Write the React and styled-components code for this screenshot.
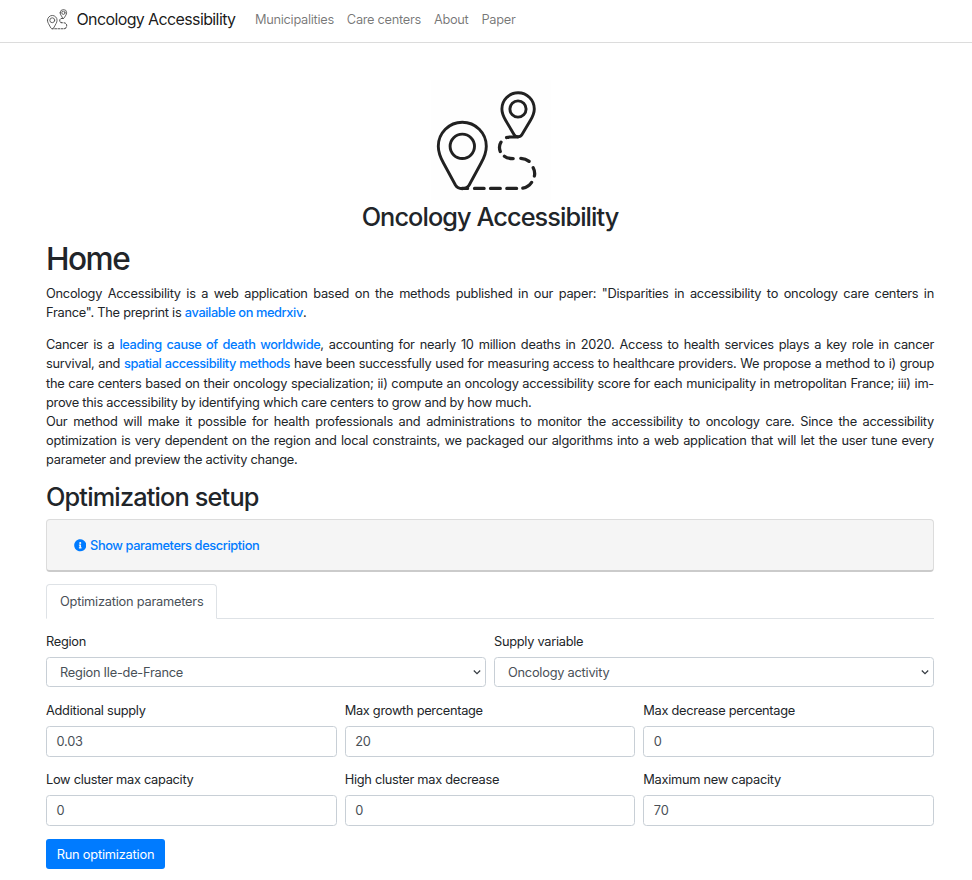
import React from "react";
import styled, { createGlobalStyle } from "styled-components";

const GlobalStyle = createGlobalStyle`
  *, *::before, *::after { box-sizing: border-box; }
  body {
    margin: 0;
    background: #fff;
    color: #212529;
    font: 400 12.8px/19.2px Inter, "Liberation Sans", sans-serif;
    letter-spacing: -0.25px;
    -webkit-font-smoothing: antialiased;
  }
`;

const Navbar = styled.nav`
  display: flex;
  align-items: center;
  height: 43px;
  padding: 0 46px 3px;
  border-bottom: 1px solid #dcdcdc;
`;

const Brand = styled.a`
  display: flex;
  align-items: center;
  gap: 6.5px;
  width: 209px;
  color: rgba(0, 0, 0, 0.9);
  font-size: 16px;
  letter-spacing: -0.62px;
  white-space: nowrap;

  svg { margin-bottom: 2px; }
`;

const NavLink = styled.a`
  margin-right: 13px;
  color: rgba(0, 0, 0, 0.54);
  letter-spacing: -0.3px;
  white-space: nowrap;
`;

const Page = styled.main`
  width: 888px;
  margin: 37px 0 0 46px;
`;

const Hero = styled.header`
  display: flex;
  flex-direction: column;
  align-items: center;

  svg {
    margin-left: 2px;
    background: #fefefe;
  }
`;

const Title = styled.h1`
  margin: 0;
  height: ${(p) => p.$height}px;
  font-size: ${(p) => p.$size}px;
  line-height: ${(p) => p.$line || p.$height}px;
  font-weight: 540;
  letter-spacing: ${(p) => p.$track || 0}px;
  white-space: nowrap;
`;

const Paragraph = styled.p`
  margin: 0 0 12.8px;
`;

const Line = styled.span`
  display: block;
  white-space: nowrap;
  text-align: justify;
  text-align-last: ${(p) => (p.$last ? "left" : "justify")};
`;

const Link = styled.a`
  color: #007bff;
  font-weight: 540;
  letter-spacing: -0.39px;
`;

const InfoBar = styled.section`
  display: flex;
  align-items: center;
  gap: 4px;
  height: 53px;
  margin-top: 5px;
  padding: 0 26.500px;
  background: #f5f5f5;
  border: 1px solid #dcdcdc;
  border-bottom: 2px solid #cbcbcb;
  border-radius: 4px;
`;

const Tabs = styled.div`
  display: flex;
  height: 35px;
  margin-top: 12px;
  border-bottom: 1px solid #dee2e6;
`;

const Tab = styled.div`
  width: 171px;
  height: 35px;
  padding: 7px 13px;
  border: 1px solid #dee2e6;
  border-bottom-color: #fff;
  border-radius: 4px 4px 0 0;
  background: #fff;
  color: #495057;
  letter-spacing: -0.22px;
  white-space: nowrap;
`;

const FormRow = styled.div`
  display: grid;
  grid-template-columns: repeat(${(p) => p.$cols}, 1fr);
  gap: 8px;
  height: 69px;
`;

const Field = styled.label`
  display: flex;
  flex-direction: column;
  gap: 6px;
  line-height: 19px;
  letter-spacing: -0.28px;
`;

const Control = styled.div`
  display: flex;
  align-items: center;
  justify-content: space-between;
  height: ${(p) => (p.$select ? 30 : 31)}px;
  padding: ${(p) => (p.$select ? "0 3px 0 13px" : "0 9.5px")};
  border: 1px solid #c8cfd6;
  border-radius: 3.5px;
  color: #495057;
  letter-spacing: -0.24px;
`;

const Button = styled.button`
  display: block;
  width: 119px;
  height: 30px;
  padding: 0;
  border: 0;
  border-radius: 3px;
  background: #007bff;
  color: #fff;
  font: inherit;
  letter-spacing: -0.2px;
  white-space: nowrap;
`;

function Route({ size, stroke, color }) {
  return (
    <svg width={size} height={size} viewBox="0 0 120 120" fill="none" stroke={color} strokeWidth={stroke} strokeLinecap="round" strokeLinejoin="round">
      <circle cx="31.3" cy="66.3" r="12.2" />
      <path d="M7.3 66.3a24 24 0 0 1 48 0c0 6.8-2.2 11.5-5.3 17L38.2 105c-2.9 4.9-10.900 4.900-13.800 0L12.6 83.3c-3.1-5.5-5.3-10.2-5.3-17Z" />
      <circle cx="87" cy="29" r="8.1" />
      <path d="M70.9 29a16.2 16.2 0 0 1 32.4 0c0 4.5-1.8 7.8-3.8 11.3L91 54.5c-1.7 3-6.3 3-8 0l-8.4-14.2c-2-3.5-3.7-6.8-3.7-11.3Z" />
      <path strokeWidth={stroke * 1.12} d="M75.600 57.6c1.2-.5 2.5-.6 4-.6h7M70 62.2c-1.8 2.8-2 6-.7 9.4M73.4 76.2c2.2 1.7 5 2.4 8.8 2.4M89.8 78.4c3.4.2 6 1.2 8.3 3M102.2 87.8c1.5 2.8 1.8 5.4 1.2 8.2M100.6 102.4c-2 3-5 5.1-8.8 5.8M85.6 108.4h-9.8M69.300 108.4H59.500M53.100 108.4H43.500M36.6 108.4H31" />
    </svg>
  );
}

const InfoIcon = () => (
  <svg width="12.5" height="12.5" viewBox="0 0 512 512" fill="#007bff">
    <path d="M256 8C119 8 8 119 8 256s111 248 248 248 248-111 248-248S393 8 256 8zm0 110c23.200 0 42 18.800 42 42s-18.800 42-42 42-42-18.800-42-42 18.800-42 42-42zm56 254c0 6.600-5.400 12-12 12h-88c-6.600 0-12-5.400-12-12v-24c0-6.600 5.400-12 12-12h12v-64h-12c-6.600 0-12-5.400-12-12v-24c0-6.600 5.400-12 12-12h64c6.600 0 12 5.400 12 12v100h12c6.600 0 12 5.400 12 12v24z" />
  </svg>
);

const Chevron = () => (
  <svg width="10" height="10" viewBox="0 0 10 10" fill="none" stroke="#343a40" strokeWidth="1.2">
    <path d="M1.800 3.500L5 6.700L8.200 3.500" />
  </svg>
);

const rows = [
  [
    { label: "Region", value: "Region Ile-de-France", select: true },
    { label: "Supply variable", value: "Oncology activity", select: true },
  ],
  [
    { label: "Additional supply", value: "0.03" },
    { label: "Max growth percentage", value: "20" },
    { label: "Max decrease percentage", value: "0" },
  ],
  [
    { label: "Low cluster max capacity", value: "0" },
    { label: "High cluster max decrease", value: "0" },
    { label: "Maximum new capacity", value: "70" },
  ],
];

const Form = styled.form`
  margin-top: 13px;
`;

export default function App() {
  return (
    <>
      <GlobalStyle />
      <Navbar>
        <Brand>
          <Route size={24} stroke={4.5} color="#555" />
          Oncology Accessibility
        </Brand>
        <NavLink>Municipalities</NavLink>
        <NavLink>Care centers</NavLink>
        <NavLink>About</NavLink>
        <NavLink>Paper</NavLink>
      </Navbar>
      <Page>
        <Hero>
          <Route size={120} stroke={2.9} color="#212121" />
          <Title as="h2" $size={25.3} $height={34} $track={-0.92}>Oncology Accessibility</Title>
        </Hero>
        <Title $size={31.6} $height={50} $line={50} $track={-1.5}>Home</Title>
        <Paragraph>
          <Line>Oncology Accessibility is a web application based on the methods published in our paper: "Disparities in accessibility to oncology care centers in</Line>
          <Line $last>France". The preprint is <Link>available on medrxiv</Link>.</Line>
        </Paragraph>
        <Paragraph>
          <Line>Cancer is a <Link>leading cause of death worldwide</Link>, accounting for nearly 10 million deaths in 2020. Access to health services plays a key role in cancer</Line>
          <Line>survival, and <Link>spatial accessibility methods</Link> have been successfully used for measuring access to healthcare providers. We propose a method to i) group</Line>
          <Line>the care centers based on their oncology specialization; ii) compute an oncology accessibility score for each municipality in metropolitan France; iii) im-</Line>
          <Line $last>prove this accessibility by identifying which care centers to grow and by how much.</Line>
          <Line>Our method will make it possible for health professionals and administrations to monitor the accessibility to oncology care. Since the accessibility</Line>
          <Line>optimization is very dependent on the region and local constraints, we packaged our algorithms into a web application that will let the user tune every</Line>
          <Line $last>parameter and preview the activity change.</Line>
        </Paragraph>
        <Title as="h2" $size={25.3} $height={32} $line={30} $track={-0.83}>Optimization setup</Title>
        <InfoBar>
          <InfoIcon />
          <Link>Show parameters description</Link>
        </InfoBar>
        <Tabs>
          <Tab>Optimization parameters</Tab>
        </Tabs>
        <Form>
          {rows.map((fields, i) => (
            <FormRow key={i} $cols={fields.length}>
              {fields.map((f) => (
                <Field key={f.label}>
                  <span>{f.label}</span>
                  <Control $select={f.select}>
                    <span>{f.value}</span>
                    {f.select && <Chevron />}
                  </Control>
                </Field>
              ))}
            </FormRow>
          ))}
          <Button type="button">Run optimization</Button>
        </Form>
      </Page>
    </>
  );
}
